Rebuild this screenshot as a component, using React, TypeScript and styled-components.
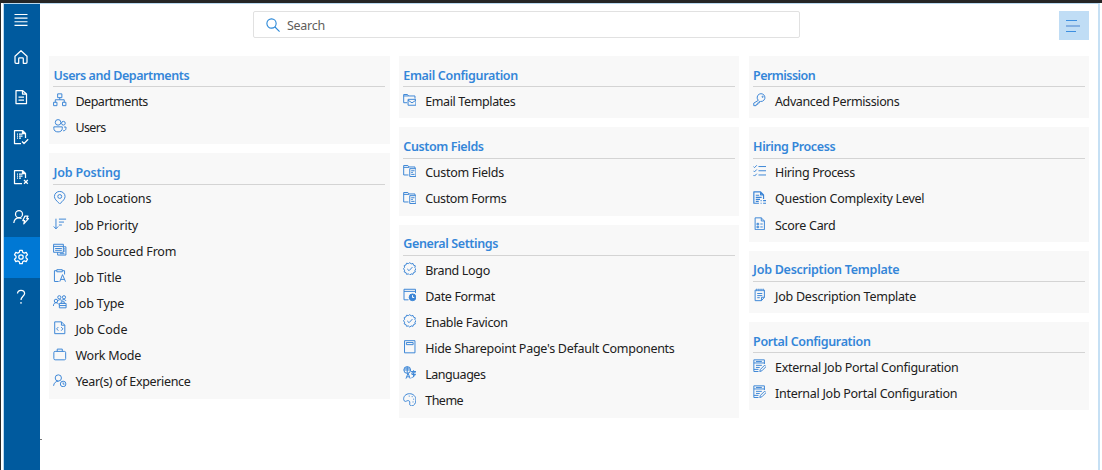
import React from "react";
import styled, { createGlobalStyle } from "styled-components";

const Global = createGlobalStyle`
  * { box-sizing: border-box; }
  html, body { margin: 0; padding: 0; height: 100%; overflow: hidden; background: #fff; }
  body { font-family: "Noto Sans", "Open Sans", sans-serif; }
`;

const Screen = styled.div`
  width: 1102px;
  height: 470px;
  display: flex;
  flex-direction: column;
  background: #fff;
`;
const TopStrip = styled.div`
  height: 3px;
  flex: none;
  background: #252525;
`;
const Frame = styled.div`
  flex: 1;
  min-height: 0;
  display: flex;
  border-left: 1px solid #2a2a2a;
  padding: 0 2px;
`;
const Surface = styled.div`
  flex: 1;
  display: flex;
  border: 1px solid #b9d9f0;
  border-right: 2px solid #c6e0f4;
  border-bottom: 0;
`;
const Sidebar = styled.nav`
  width: 36px;
  flex: none;
  display: flex;
  flex-direction: column;
  background: #005a9e;
`;
const NavItem = styled.button<{ $active?: boolean; $h?: number }>`
  width: 36px;
  height: ${(p) => p.$h ?? 40.1}px;
  flex: none;
  display: flex;
  align-items: center;
  justify-content: center;
  padding: 0 2px 1px 0;
  border: 0;
  color: #fff;
  background: ${(p) => (p.$active ? "#0078d4" : "transparent")};
`;
const Main = styled.main`
  flex: 1;
  min-width: 0;
  display: flex;
  flex-direction: column;
  position: relative;
`;
const Header = styled.header`
  height: 52px;
  flex: none;
  display: flex;
  align-items: flex-start;
  padding: 7px 9px 0 213px;
`;
const SearchBox = styled.label`
  width: 547px;
  height: 27px;
  display: flex;
  align-items: center;
  gap: 7px;
  padding-left: 12px;
  border: 1px solid #e1e1e1;
  border-radius: 2px;
  color: #2b88d8;
`;
const SearchText = styled.span`
  font-size: 12.5px;
  line-height: 18px;
  letter-spacing: -0.28px;
  color: #5f5d5b;
  padding-top: 2px;
`;
const MenuButton = styled.button`
  width: 30px;
  height: 29px;
  margin-left: auto;
  display: flex;
  align-items: center;
  justify-content: center;
  padding: 0;
  border: 0;
  background: #c0ddf5;
`;
const Columns = styled.div`
  display: grid;
  grid-template-columns: repeat(3, 340.5px);
  column-gap: 9.3px;
  padding-left: 9px;
`;
const Column = styled.div`
  display: flex;
  flex-direction: column;
  gap: 9.1px;
`;
const Card = styled.section`
  background: #f8f8f8;
  padding: 0 4.5px 4.1px 4px;
`;
const CardTitle = styled.h2<{ $ls: number }>`
  height: 31.4px;
  margin: 0;
  padding: 10.5px 0 0 0.5px;
  border-bottom: 1px solid #d4d4d4;
  font-size: 12.5px;
  line-height: 17px;
  font-weight: 600;
  letter-spacing: ${(p) => p.$ls}px;
  color: #3486d8;
  white-space: nowrap;
`;
const List = styled.ul`
  list-style: none;
  margin: 0;
  padding: 0.5px 0 0;
`;
const Row = styled.li`
  height: 26.16px;
  display: flex;
  align-items: center;
  color: #3a84d6;
`;
const IconSlot = styled.span`
  width: 22.4px;
  flex: none;
  display: flex;
  padding-bottom: 2px;
`;
const RowLabel = styled.span<{ $ls: number }>`
  font-size: 12.5px;
  line-height: 18px;
  padding-top: 2px;
  letter-spacing: ${(p) => p.$ls}px;
  color: #202020;
  white-space: nowrap;
`;
const Dot = styled.span`
  position: absolute;
  left: 0;
  top: 435px;
  width: 2px;
  height: 1px;
  background: #777;
`;

const icons: Record<string, React.ReactNode> = {
  menu: <path d="M1.5 2.500h13M1.5 6.100h13M1.5 9.700h13M1.5 13.300h13" />,
  home: <path d="M2 7.2 8 1.7l6 5.5v6.1c0 .6-.4 1-1 1h-2.7V9.7c0-.5-.3-.8-.8-.8h-3c-.5 0-.8.3-.8.8v4.6H3c-.6 0-1-.4-1-1z" />,
  doc: <path d="M3 1.5h6.5L13.5 5v9.5H3zM9.5 1.5V5h4M5.5 8h5.5M5.500 11h5.500" />,
  docCheck: <path d="M8 14.5H1.5v-13h8L12.5 4.5V9M9.5 1.5v3h3M4 5.200h1M4 7.200h1M4 9.200h1M6 5.200h3.500M6 7.200h3.500M6 9.200h2M9 12.500l2 2 4.200-4.200" />,
  docX: <path d="M9 14.500H1.500v-13h8L12.500 4.500V9M9.500 1.500v3h3M4 5.200h1M4 7.200h1M4 9.200h1M6 5.200h3.500M6 7.200h3.500M6 9.200h2M11 11l3.800 3.800M14.800 11 11 14.800" />,
  userBolt: <><circle cx="6" cy="5.2" r="3.5" /><path d="M.8 14c.3-3 2.3-5.2 5.2-5.2 1 0 1.8.2 2.5.7M12 7h3l-1.300 2.700h1.800l-4.700 5.200.9-3.400H9.800z" /></>,
  gear: <><circle cx="8" cy="8" r="2.2" /><path d="m6.700 1.300-.4 2-1.500.8-2-.7-1.300 2.300L3 7.100v1.800l-1.500 1.400 1.300 2.300 2-.7 1.500.8.4 2h2.600l.4-2 1.500-.8 2 .7 1.300-2.300L13 8.900V7.100l1.500-1.400-1.300-2.300-2 .7-1.500-.8-.4-2z" /></>,
  help: <path d="M4.500 4.500C4.600 2.500 6 1.300 8 1.300s3.600 1.200 3.600 3.200C11.600 7.200 8 7.500 8 11M8 13v1.700" />,
  search: <><circle cx="6.300" cy="6.300" r="5.300" /><path d="m10 10 5.500 5.500" /></>,
  org: <path d="M5.500 1h5v4.500h-5zM.7 11h4v4h-4zM11.300 11h4v4h-4zM8 5.500V8M2.700 11V8h10.600v3" />,
  users: <><circle cx="6" cy="4" r="3.300" /><circle cx="12.300" cy="5" r="2.200" /><path d="M1 9.300h10v2c0 2.400-2 4-5 4s-5-1.600-5-4zM13 9.500h2.400v1.500c0 2-1.400 3-3.400 3" /></>,
  pin: <><circle cx="8" cy="6.500" r="2.300" /><path d="M8 15.300C4 11.500 1.700 9.300 1.700 6.500a6.300 6 0 0 1 12.600 0c0 2.800-2.300 5-6.300 8.800z" /></>,
  sort: <path d="M3.500 2v12M.8 11.200 3.500 14l2.700-2.800M7 2.500h8.500M7 6h6M7 9.500h3.500" />,
  sourced: <path d="M.7 1.500h11.600v9.500H.7zM.7 4h11.600M2.500 6.500h8M2.500 8.700h8M12.300 4.500h3v9.800H5.500V11M8 12.700h5.500M13 7h1.500M13 9.500h1.500" />,
  title: <path d="M4.500 2H1.700v12.800h5M11 2h2.700v4.500M4.500.8h6.500v2.500H4.500zM8 15l3.300-8.300L14.800 15M9.300 12.300h4.200" />,
  type: <><circle cx="3.500" cy="7" r="2" /><circle cx="7.500" cy="2.700" r="1.900" /><circle cx="13" cy="2.700" r="1.900" /><path d="M.5 13c0-2.500 1.200-3.800 3-3.800S6.300 10 6.700 11M5.500 7c1-1.600 3.500-2 5-.5C11.800 5 14.700 5 15.400 7M7.500 10h8v5.200h-8zM9.700 10V8h3.600v2M7.500 12.500h8" /></>,
  code: <path d="M2 1h8l4 4v10H2zM10 1v4h4M6.300 7.200 4.300 9.300l2 2.200M9.700 7.200l2 2.100-2 2.200" />,
  work: <><rect x="1" y="4" width="14" height="10" rx="1.500" /><path d="M5 4V1.300h6V4" /></>,
  userClock: <><circle cx="6.300" cy="4.700" r="3.700" /><circle cx="12" cy="11.800" r="3.300" /><path d="M.7 14C1 10.500 3.500 8.500 6.500 8.500M12 10v2h1.600" /></>,
  folderMail: <path d="M5 11.500H.8V1.800h4.500l1.300 1.700h7.600v3M.8 3.500h5.800M6 7.500h9.300v7H6zM6 8.500l4.700 3.200 4.600-3.200" />,
  folderForm: <path d="M6.500 13H.8V1.800h5l1.300 1.700h7.100V5M.8 4h6.300M8 5.500h7.300v9.300H8zM9.700 8h4M9.700 10h2M9.700 12.300h4" />,
  badge: <path d="m8 .8 1.700 1.400 2.100-.5.7 2.100 2.100.7-.5 2.100L15.500 8l-1.400 1.700.5 2.100-2.100.7-.7 2.100-2.100-.5L8 15.500l-1.700-1.400-2.100.5-.7-2.100-2.100-.7.5-2.100L.5 8l1.400-1.700-.5-2.100 2.100-.7.7-2.100 2.100.5zM5 8.200l2.200 2.100L11.200 6" />,
  date: <><path d="M6.500 14H1.200V1.500h13.600V6M1.200 4h13.600" /><circle cx="11.300" cy="11" r="4" fill="currentColor" /><path d="M11.300 8.500v2.700h2" stroke="#fff" /></>,
  page: <path d="M1.800.8h12.400v14.400H1.800zM4 3h8v2.500H4z" />,
  lang: <><circle cx="5" cy="4.700" r="4" /><path d="M1 4.700h8M5 .7v8M2 2.500h6M3.500 15 6 8.500 8.500 15M4.500 12.800h3M9.500 6.500h6M12.500 5v1.500M15 8H10.500v2h4.500M12.500 8v5M10 14c1.500-.5 4-2 4.700-4" /></>,
  palette: <><path d="M.8 7.800C.3 4 3.500.8 7.700.8c4.500 0 7.600 3.200 7.600 7.500 0 4-2.300 7-5 7-2.200 0-2.700-1.800-2.300-3.300.4-2-.6-3-1.900-3-1.800 0-2.400 1.300-3.600.9C1.500 9.700 1 8.800.8 7.800z" /><path d="M6.800 3.700h1.200M10.300 4.300h1.200M12 7.300h1.200M11.300 10.600h1.200" /></>,
  key: <><path d="M6.300 8.700A4.600 4.600 0 1 1 9 10H7.500v1.700H5.700v1.700H4L3.700 15H.9v-3z" /><circle cx="11.400" cy="4.500" r=".7" /></>,
  checks: <path d="m.5 3 1.300 1.300L4.500 1.500M.5 8l1.300 1.300L4.500 6.500M.5 13l1.300 1.300 2.700-2.800M6.500 3h9M6.500 8h9M6.500 13h9" />,
  question: <path d="M7 14.500H1V1h8l3.500 3.500v5M9 1v3.500h3.500M3.300 5h4M3.300 7.500h7M3.300 10h5M3.300 12.300h3.500M9 11.500h1.200M12 11.500h3.500M9 14.500h1.200M12 14.500h3.500" strokeWidth="1.400" />,
  score: <path d="M2.500 1h7.300l3.700 3.700V15h-11zM9.800 1v3.700h3.700M4.700 7.500h2v1.700h-2zM4.700 11h2v1.700h-2zM8.700 8.300h2.800M8.700 11.800h2.800" />,
  note: <path d="M2.500 2.500h11V11l-3.500 4H2.500zM10 15v-4h3.500M4.500.8v3M7 .8v3M9.500.8v3M12 .8v3M5 6.500h6M5 9h6M5 11.500h3" />,
  formEdit: <path d="M6.500 14.800H1V1h12.500v5M1 4.700h12.500M3.500 2.900h7M3.500 7.500h7M3.500 10h4.500M1 12.300h5.500M8 14.800l.8-2.500 5-5 1.700 1.700-5 5z" />,
};

function Icon({ name, size = 13.5, weight = 1.15 }: { name: string; size?: number; weight?: number }) {
  return (
    <svg width={size} height={size} viewBox="0 0 16 16" fill="none" stroke="currentColor" strokeWidth={weight} strokeLinejoin="round">
      {icons[name]}
    </svg>
  );
}

type Item = [icon: string, label: string, spacing: number];
type Group = { title: string; spacing: number; items: Item[] };

const columns: Group[][] = [
  [
    {
      title: "Users and Departments",
      spacing: -0.43,
      items: [["org", "Departments", -0.47], ["users", "Users", -0.6]],
    },
    {
      title: "Job Posting",
      spacing: -0.16,
      items: [
        ["pin", "Job Locations", -0.17],
        ["sort", "Job Priority", -0.17],
        ["sourced", "Job Sourced From", -0.17],
        ["title", "Job Title", -0.08],
        ["type", "Job Type", -0.11],
        ["code", "Job Code", 0],
        ["work", "Work Mode", -0.21],
        ["userClock", "Year(s) of Experience", -0.33],
      ],
    },
  ],
  [
    { title: "Email Configuration", spacing: -0.34, items: [["folderMail", "Email Templates", -0.37]] },
    {
      title: "Custom Fields",
      spacing: -0.38,
      items: [["folderForm", "Custom Fields", -0.28], ["folderForm", "Custom Forms", -0.37]],
    },
    {
      title: "General Settings",
      spacing: -0.38,
      items: [
        ["badge", "Brand Logo", -0.34],
        ["date", "Date Format", -0.34],
        ["badge", "Enable Favicon", -0.34],
        ["page", "Hide Sharepoint Page's Default Components", -0.27],
        ["lang", "Languages", -0.46],
        ["palette", "Theme", -0.5],
      ],
    },
  ],
  [
    { title: "Permission", spacing: -0.55, items: [["key", "Advanced Permissions", -0.38]] },
    {
      title: "Hiring Process",
      spacing: -0.38,
      items: [
        ["checks", "Hiring Process", -0.34],
        ["question", "Question Complexity Level", -0.25],
        ["score", "Score Card", -0.27],
      ],
    },
    { title: "Job Description Template", spacing: -0.26, items: [["note", "Job Description Template", -0.24]] },
    {
      title: "Portal Configuration",
      spacing: -0.35,
      items: [
        ["formEdit", "External Job Portal Configuration", -0.28],
        ["formEdit", "Internal Job Portal Configuration", -0.27],
      ],
    },
  ],
];

const nav = ["home", "doc", "docCheck", "docX", "userBolt", "gear", "help"];

export default function App() {
  return (
    <>
      <Global />
      <Screen>
        <TopStrip />
        <Frame>
          <Surface>
            <Sidebar>
              <NavItem $h={33}><Icon name="menu" size={16} /></NavItem>
              {nav.map((n) => (
                <NavItem key={n} $active={n === "gear"}><Icon name={n} size={16} weight={1.25} /></NavItem>
              ))}
            </Sidebar>
            <Main>
              <Header>
                <SearchBox>
                  <Icon name="search" size={14} weight={1.25} />
                  <SearchText>Search</SearchText>
                </SearchBox>
                <MenuButton>
                  <svg width="16" height="13" viewBox="0 0 16 13" stroke="#3d8fe0" fill="none">
                    <path d="M0 1.500h11M0 12.500h10" />
                    <path d="M0 7h14" stroke="#84b0e2" strokeWidth="2" />
                  </svg>
                </MenuButton>
              </Header>
              <Columns>
                {columns.map((groups, i) => (
                  <Column key={i}>
                    {groups.map((g) => (
                      <Card key={g.title}>
                        <CardTitle $ls={g.spacing}>{g.title}</CardTitle>
                        <List>
                          {g.items.map(([icon, label, ls]) => (
                            <Row key={label}>
                              <IconSlot><Icon name={icon} /></IconSlot>
                              <RowLabel $ls={ls}>{label}</RowLabel>
                            </Row>
                          ))}
                        </List>
                      </Card>
                    ))}
                  </Column>
                ))}
              </Columns>
              <Dot />
            </Main>
          </Surface>
        </Frame>
      </Screen>
    </>
  );
}
